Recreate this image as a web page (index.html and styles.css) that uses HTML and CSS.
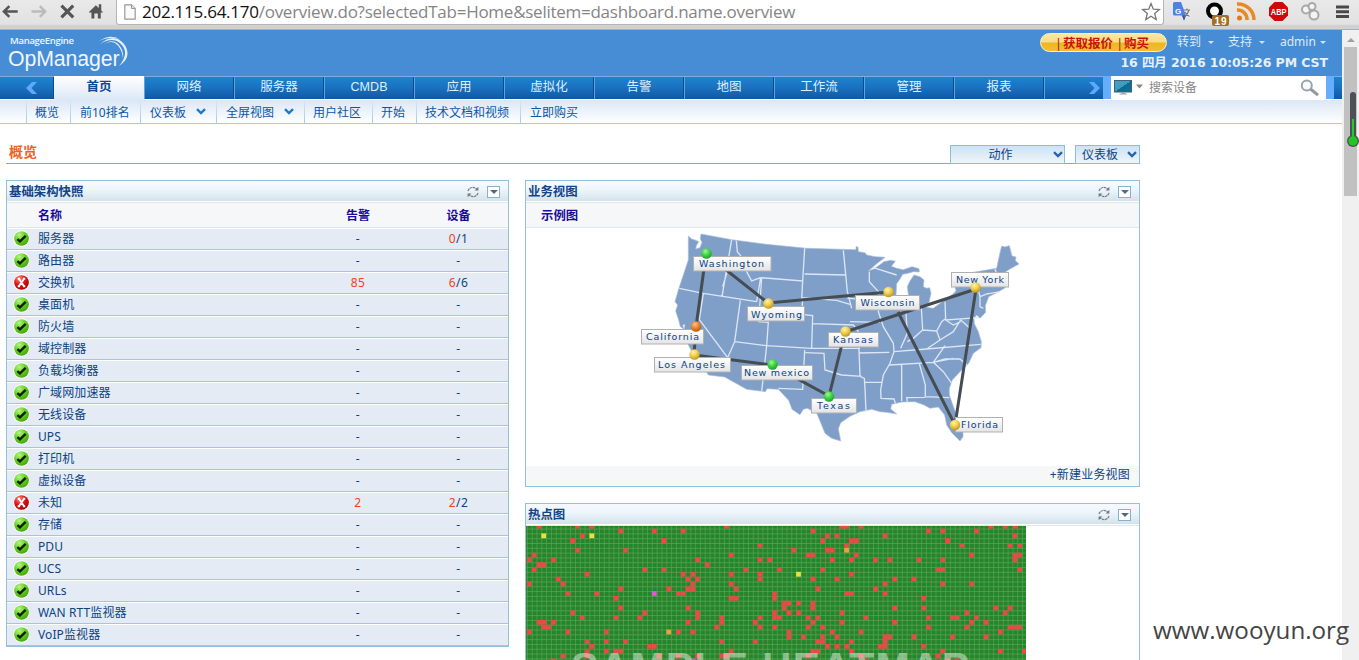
FILE: index.html
```html
<!DOCTYPE html>
<html lang="zh-CN">
<head>
<meta charset="utf-8">
<title>OpManager</title>
<link rel="stylesheet" href="styles.css">
</head>
<body>
<svg class="defs" width="0" height="0">
  <defs>
    <radialGradient id="gOk" cx=".35" cy=".25" r=".8"><stop offset="0" stop-color="#b4f58a"/><stop offset=".5" stop-color="#66cf22"/><stop offset="1" stop-color="#43a508"/></radialGradient>
    <radialGradient id="gBad" cx=".35" cy=".25" r=".8"><stop offset="0" stop-color="#ff8a80"/><stop offset=".5" stop-color="#dc1414"/><stop offset="1" stop-color="#a80000"/></radialGradient>
    <radialGradient id="gG" cx=".4" cy=".3" r=".7"><stop offset="0" stop-color="#a6f59a"/><stop offset=".5" stop-color="#3fd845"/><stop offset="1" stop-color="#24a02c"/></radialGradient>
    <radialGradient id="gY" cx=".4" cy=".3" r=".7"><stop offset="0" stop-color="#fff3b0"/><stop offset=".5" stop-color="#f2cf4b"/><stop offset="1" stop-color="#c09a20"/></radialGradient>
    <radialGradient id="gO" cx=".4" cy=".3" r=".7"><stop offset="0" stop-color="#ffc58c"/><stop offset=".5" stop-color="#ef8630"/><stop offset="1" stop-color="#b85a10"/></radialGradient>
    <linearGradient id="gLabel" x1="0" y1="0" x2="0" y2="1"><stop offset="0" stop-color="#fff"/><stop offset="1" stop-color="#e4e4e4"/></linearGradient>
    <linearGradient id="gMon" x1="0" y1="0" x2="1" y2="1"><stop offset="0" stop-color="#4a9fc0"/><stop offset=".5" stop-color="#3d9bbd"/><stop offset=".5" stop-color="#0c6a94"/><stop offset="1" stop-color="#0d7298"/></linearGradient>
    <symbol id="ok" viewBox="0 0 18 18"><circle cx="9" cy="9" r="8.7" fill="#fff"/><circle cx="9" cy="9" r="7.8" fill="url(#gOk)"/><path d="M4.600 9.600 7.400 12.100 13.400 6.200" fill="none" stroke="#0b1c04" stroke-width="2.400"/></symbol>
    <symbol id="bad" viewBox="0 0 18 18"><circle cx="9" cy="9" r="8.7" fill="#fff"/><circle cx="9" cy="9" r="7.8" fill="url(#gBad)"/><path d="M6.300 5 11.700 13M11.700 5 6.300 13M5 5H7.500M10.500 5H13M5 13H7.500M10.500 13H13" stroke="#fff" stroke-width="2"/></symbol>
    <symbol id="refresh" viewBox="0 0 12 12"><path d="M1 5A5 4.600 0 0 1 10 3.400M11 7A5 4.600 0 0 1 2 8.600" fill="none" stroke="#777f86" stroke-width="1.200" stroke-dasharray="2.600 .5"/><path d="M11.400.800V4.600H7.600ZM.6 11.200V7.400H4.400Z" fill="#707980"/></symbol>
    <symbol id="chev" viewBox="0 0 10 7"><path d="M1 1.200 5 5 9 1.200" fill="none" stroke="currentColor" stroke-width="2.400"/></symbol>
  </defs>
</svg>

<div class="chrome">
  <svg class="chrome-nav" width="118" height="29" viewBox="0 0 118 29">
    <path d="M4 11.500H18M9.500 6 4 11.500 9.500 17" fill="none" stroke="#555" stroke-width="2.600"/>
    <path d="M32 11.500H46M40.500 6 46 11.500 40.500 17" fill="none" stroke="#bbb" stroke-width="2.400"/>
    <path d="M62.500 5.500 74.500 17.500M74.500 5.500 62.500 17.500" stroke="#555" stroke-width="3.200"/>
    <path d="M90.500 12 97.500 5 100.500 8V4H103V10.500L105 12.500H102.500V18.500H99.500V13.500H96V18.500H93V12.500H90.500Z" fill="#555"/>
  </svg>
  <div class="omnibox">
    <svg width="12" height="16" viewBox="0 0 12 16"><path d="M.8.800H7.500L11.200 4.500V15.200H.8Z" fill="#fafafa" stroke="#999" stroke-width="1.200"/><path d="M7.500.800V4.500H11.200" fill="#ddd" stroke="#999"/></svg>
    <span class="url"><b>202.115.64.170</b>/overview.do?selectedTab=Home&amp;selitem=dashboard.name.overview</span>
    <svg class="star" width="20" height="19" viewBox="0 0 20 19"><path d="M10 1.500 12.300 7.200 18.400 7.600 13.700 11.500 15.200 17.500 10 14.200 4.800 17.500 6.300 11.500 1.600 7.600 7.700 7.200Z" fill="#fff" stroke="#777" stroke-width="1.300"/></svg>
  </div>
  <svg class="exts" width="195" height="29" viewBox="1164 0 195 29">
    <path d="M1180 8H1189L1191 18H1182Z" fill="#ececec"/>
    <path d="M1174.500 2H1181L1186 15.500 1184 20.500 1182 15.500H1174.500Q1173 15.500 1173 14V3.500Q1173 2 1174.500 2Z" fill="#4c82e4"/><path d="M1182 15.500H1186L1184 20.500Z" fill="#3053b4"/>
    <text x="1175" y="13.500" class="ico-g">G</text><path d="M1183.500 10H1190M1187 8.500V10M1189 10Q1188 14 1184.500 17M1185 12Q1187 15.500 1189.500 16.500" fill="none" stroke="#777" stroke-width="1.200"/>
    <circle cx="1214.500" cy="11" r="6.500" fill="#fff" stroke="#050505" stroke-width="4"/><rect x="1212" y="15" width="17" height="11" rx="2" fill="#a66f25"/><text x="1214.500" y="24.500" class="ico-19" textLength="12">19</text>
    <g fill="none" stroke="#e88a23" stroke-width="3.500"><path d="M1237 4A16 16 0 0 1 1254 20"/><path d="M1237 10A9.500 9.500 0 0 1 1247 20"/></g><circle cx="1239.500" cy="18" r="2.500" fill="#e07a15"/>
    <path d="M1274.500 2H1282.500L1288 7.500V15.500L1282.500 21H1274.500L1269 15.500V7.500Z" fill="#cf0808"/><text x="1270.800" y="15.200" class="ico-abp" textLength="15.600" lengthAdjust="spacingAndGlyphs">ABP</text>
    <g fill="#f4f4f4" stroke="#a8a8a8" stroke-width="2"><circle cx="1306" cy="9.500" r="4"/><circle cx="1312" cy="6.500" r="3.500"/><circle cx="1314" cy="15" r="4.500"/></g>
    <path d="M1336 7H1349M1336 11.700H1349M1336 16.400H1349" stroke="#484848" stroke-width="3"/>
  </svg>
</div>

<div class="viewport">
<div class="page">
  <header class="top">
    <div class="logo">
      <span class="logo-a">ManageEngine</span><span class="logo-b">OpManager</span>
      <svg class="swoosh" width="34" height="34" viewBox="0 0 34 34"><path d="M3 8Q17-4 27 8 36 21 22 30 33 17 24 8 16 0 3 8ZM5 10Q15 1 22 9 27 15 26 22 25 12 18 7 12 4 5 10ZM2 5Q14-3 24 4 16-1 2 5Z" fill="#e6f1fc"/></svg>
    </div>
    <div class="user">
      <div class="links">
        <span class="buy"><i>|</i>获取报价 <i>|</i>购买</span>
        <span class="lk lk1">转到<i class="tri"></i></span><span class="lk lk2">支持<i class="tri"></i></span><span class="lk lk3">admin<i class="tri"></i></span>
      </div>
      <div class="date">16 四月 2016 10:05:26 PM CST</div>
    </div>
  </header>

  <nav class="nav">
    <span class="prev"><svg width="12" height="14" viewBox="0 0 12 14"><path d="M11 1H6L0 7 6 13H11L5.500 7Z" fill="#5ea8ff"/></svg></span>
    <a class="tab on">首页</a><a class="tab">网络</a><a class="tab">服务器</a><a class="tab lat">CMDB</a><a class="tab">应用</a><a class="tab">虚拟化</a><a class="tab">告警</a><a class="tab">地图</a><a class="tab">工作流</a><a class="tab">管理</a><a class="tab">报表</a>
    <span class="next"><svg width="12" height="14" viewBox="0 0 12 14"><path d="M1 1H6L12 7 6 13H1L6.500 7Z" fill="#5ea8ff"/></svg></span>
    <div class="search">
      <svg width="30" height="16" viewBox="0 0 30 16"><rect x=".5" y=".5" width="17" height="11.500" fill="url(#gMon)" stroke="#3b6276"/><path d="M7.500 12H11V13.500H13V14.500H5.500V13.500H7.500Z" fill="#9aa5aa"/><path d="M22 4.500H29L25.500 8.500Z" fill="#888"/></svg>
      <span>搜索设备</span>
      <svg class="mag" width="20" height="18" viewBox="0 0 20 18"><circle cx="6.800" cy="6.500" r="5" fill="#f8fafc" stroke="#9aa4ad" stroke-width="2"/><path d="M10.500 10 18 16.200" stroke="#9099a0" stroke-width="3"/></svg>
    </div>
  </nav>

  <nav class="sub">
    <a class="s0"></a><a class="s1">概览</a><a class="s2">前10排名</a><a class="s3">仪表板<svg><use href="#chev"/></svg></a><a class="s4">全屏视图<svg><use href="#chev"/></svg></a><a class="s5">用户社区</a><a class="s6">开始</a><a class="s7">技术文档和视频</a><a class="s8">立即购买</a>
  </nav>

  <div class="title">
    <h1>概览</h1>
    <div class="dd dd1"><span>动作</span><svg><use href="#chev"/></svg></div>
    <div class="dd dd2"><span>仪表板</span><svg><use href="#chev"/></svg></div>
  </div>

  <main class="cols">
    <section class="panel left">
      <div class="ph"><h2>基础架构快照</h2><svg class="rf"><use href="#refresh"/></svg><i class="mn"></i></div>
      <div class="row head"><span></span><b>名称</b><b>告警</b><b>设备</b></div>
      <div class="row"><svg><use href="#ok"/></svg><span>服务器</span><em>-</em><em><u>0</u>/1</em></div>
      <div class="row"><svg><use href="#ok"/></svg><span>路由器</span><em>-</em><em>-</em></div>
      <div class="row"><svg><use href="#bad"/></svg><span>交换机</span><em><u>85</u></em><em><u>6</u>/6</em></div>
      <div class="row"><svg><use href="#ok"/></svg><span>桌面机</span><em>-</em><em>-</em></div>
      <div class="row"><svg><use href="#ok"/></svg><span>防火墙</span><em>-</em><em>-</em></div>
      <div class="row"><svg><use href="#ok"/></svg><span>域控制器</span><em>-</em><em>-</em></div>
      <div class="row"><svg><use href="#ok"/></svg><span>负载均衡器</span><em>-</em><em>-</em></div>
      <div class="row"><svg><use href="#ok"/></svg><span>广域网加速器</span><em>-</em><em>-</em></div>
      <div class="row"><svg><use href="#ok"/></svg><span>无线设备</span><em>-</em><em>-</em></div>
      <div class="row"><svg><use href="#ok"/></svg><span>UPS</span><em>-</em><em>-</em></div>
      <div class="row"><svg><use href="#ok"/></svg><span>打印机</span><em>-</em><em>-</em></div>
      <div class="row"><svg><use href="#ok"/></svg><span>虚拟设备</span><em>-</em><em>-</em></div>
      <div class="row"><svg><use href="#bad"/></svg><span>未知</span><em><u>2</u></em><em><u>2</u>/2</em></div>
      <div class="row"><svg><use href="#ok"/></svg><span>存储</span><em>-</em><em>-</em></div>
      <div class="row"><svg><use href="#ok"/></svg><span>PDU</span><em>-</em><em>-</em></div>
      <div class="row"><svg><use href="#ok"/></svg><span>UCS</span><em>-</em><em>-</em></div>
      <div class="row"><svg><use href="#ok"/></svg><span>URLs</span><em>-</em><em>-</em></div>
      <div class="row"><svg><use href="#ok"/></svg><span>WAN RTT监视器</span><em>-</em><em>-</em></div>
      <div class="row"><svg><use href="#ok"/></svg><span>VoIP监视器</span><em>-</em><em>-</em></div>
    </section>

    <div class="right">
      <section class="panel biz">
        <div class="ph"><h2>业务视图</h2><svg class="rf"><use href="#refresh"/></svg><i class="mn"></i></div>
        <div class="bhead">示例图</div>
        <svg class="map" width="613" height="238" viewBox="526 228 613 238">
          <g transform="translate(620 225) scale(.33333)">
            <path class="land" d="M205 33 215 42 225 45 236 50 229 62 227 72 240 68 246 52 241 42 243 27 335 44 440 58 560 70 708 74 708 65 714 66 715 80 735 83 740 90 765 95 795 97 768 118 745 138 762 132 792 110 812 106 826 109 814 124 830 130 850 134 876 125 897 131 898 141 880 140 864 145 848 148 840 162 830 176 828 210 830 235 846 241 862 238 866 215 862 185 870 168 882 150 900 155 912 165 910 185 920 190 929 188 933 205 927 232 918 247 940 250 975 224 1000 206 1008 197 1004 182 1035 160 1060 142 1130 130 1138 92 1145 63 1154 66 1168 62 1176 93 1188 96 1186 107 1197 117 1170 132 1150 145 1134 162 1134 180 1152 180 1156 188 1130 203 1106 215 1096 242 1097 262 1080 280 1070 270 1062 280 1063 296 1075 320 1084 350 1083 368 1060 385 1046 415 1025 435 1013 448 997 465 988 490 988 510 1002 550 1016 585 1029 610 1029 635 1020 648 996 624 980 600 974 570 955 546 930 550 912 540 885 530 845 531 815 538 812 552 830 567 800 562 780 560 755 553 720 560 690 574 662 593 655 611 662 648 635 640 615 625 605 600 590 564 562 550 550 553 540 569 516 553 506 526 475 493 441 491 436 500 380 493 314 456 265 450 250 425 222 402 213 375 190 330 195 298 188 300 191 312 181 305 176 285 167 258 173 240 165 230 175 195 190 150 205 105Z"/>
            <path class="bord" d="M178 190 250 205 410 230M335 44 306 215M349 48 352 80 372 105 380 140 395 168 422 158M322 140 308 185M422 158 548 168 554 70M422 158 410 230M425 158 416 290 445 292 440 362M361 226 344 350 323 398 238 284 250 205M344 350 440 362 575 370M440 362 425 500M554 147 676 150M548 168 545 225M545 218 650 226 690 238M548 225 545 268 578 272 575 370M578 296 700 300 715 320M575 370 720 370M554 375 548 493 475 490M556 383 612 385 615 435 665 450 725 454M670 76 682 200 695 250M682 220 775 225M748 140 748 170 775 200 780 225 775 260 790 305 820 355 822 380 810 415 790 450 782 495 783 520 822 522 826 535M715 320 720 454 733 460 735 490 738 560M718 384 808 382M735 472 785 472M690 290 780 292M760 128 830 150M822 380 920 372 1082 358M808 420 940 412 1000 400M845 420 845 528M898 416 916 480 916 515 988 518M857 250 862 325 842 370M860 250 905 245M904 248 908 315 880 340 862 350M908 315 950 318 965 290 978 280M950 318 960 345 920 372M975 230 977 285 1075 278M977 285 1000 300 1022 290M960 345 1000 320 1022 285 1050 310M940 412 970 440 995 475M975 362 940 412M940 412 975 402 1020 402 1040 420M1062 142 1080 215 1080 245 1090 250M1080 215 1105 205M1125 132 1135 160M1095 208 1140 200M915 517 860 518 862 530"/>
          </g>
          <path class="link" d="M706 254 696 327 694 355 772 365 829 396 845 332 976 289 955 425 898 312M889 292 768 303 706 254"/>
          <g class="lbl">
            <rect x="693.500" y="256.500" width="77.500" height="14.500"/><text x="699" y="267" textLength="65">Washington</text>
            <rect x="747.500" y="306.500" width="57" height="14.500"/><text x="751" y="317.500" textLength="51">Wyoming</text>
            <rect x="855.500" y="295.500" width="64" height="14.500"/><text x="860.500" y="306" textLength="54">Wisconsin</text>
            <rect x="951.500" y="272.500" width="57" height="14.500"/><text x="956" y="283" textLength="48">New York</text>
            <rect x="641.500" y="329.500" width="62" height="14.500"/><text x="646" y="340" textLength="53">California</text>
            <rect x="654.500" y="357.500" width="76" height="14.500"/><text x="658" y="368" textLength="67">Los Angeles</text>
            <rect x="741.500" y="365.500" width="71" height="14.500"/><text x="744" y="376" textLength="65">New mexico</text>
            <rect x="828.500" y="332.500" width="50" height="14.500"/><text x="833" y="343" textLength="40">Kansas</text>
            <rect x="811.500" y="398.500" width="45" height="14.500"/><text x="817" y="409" textLength="33">Texas</text>
            <rect x="955.500" y="417.500" width="47" height="14.500"/><text x="961" y="428" textLength="37">Florida</text>
          </g>
          <g fill="url(#gG)"><circle cx="706.500" cy="253.500" r="5.200"/><circle cx="772.500" cy="364.500" r="5.200"/><circle cx="829" cy="396.500" r="5.200"/></g>
          <g fill="url(#gY)"><circle cx="768.500" cy="303.500" r="5.200"/><circle cx="888.500" cy="292" r="5.200"/><circle cx="975.500" cy="287.500" r="5.200"/><circle cx="694.500" cy="354.500" r="5.200"/><circle cx="845.500" cy="331.500" r="5.200"/><circle cx="955" cy="425" r="5.200"/></g>
          <circle cx="696" cy="326.500" r="5.200" fill="url(#gO)"/>
        </svg>
        <div class="bfoot">+新建业务视图</div>
      </section>
      <section class="panel heat">
        <div class="ph"><h2>热点图</h2><svg class="rf"><use href="#refresh"/></svg><i class="mn"></i></div>
        <svg class="heatmap" width="500" height="134" viewBox="526 526 500 134">
          <defs><pattern id="cell" x="526.900" y="528.600" width="4.807" height="4.807" patternUnits="userSpaceOnUse"><rect width="4.807" height="4.807" fill="#258529"/><path d="M0 0H4.807M0 0V4.807" stroke="#5aa25a" stroke-width="1.300"/></pattern></defs>
          <rect x="526" y="526" width="500" height="134" fill="url(#cell)"/>
          <g id="cells"></g>
          <text x="571" y="680.500" class="sample" textLength="398">SAMPLE HEATMAP</text>
        </svg>
      </section>
    </div>
  </main>
</div>
<div class="scroll"><i class="up"></i><div class="thumb"></div></div>
</div>

<svg class="gauge" width="18" height="60" viewBox="0 0 18 60"><rect x="6" y="0" width="6" height="48" rx="3" fill="#4b5157"/><circle cx="9" cy="49" r="6" fill="#4b5157"/><rect x="8" y="27" width="2" height="20" fill="#2c2"/><circle cx="9" cy="49" r="4.700" fill="#22c522"/></svg>
<div class="mark">www.wooyun.org</div>
<script src="heatmap.js"></script>
</body>
</html>
```

FILE: styles.css
```css
* { box-sizing: border-box; }
body { margin: 0; width: 1359px; height: 660px; overflow: hidden; position: relative; background: #fff; font: 12px/16px "Noto Sans", "Noto Sans CJK SC", sans-serif; color: #0b4383; }
.defs { position: absolute; }
h1, h2 { margin: 0; }
i, em { font-style: normal; }
u { text-decoration: none; color: #f8401c; }

.chrome { height: 30px; display: flex; background: linear-gradient(#e9e9e9, #e2e2e2 24px, #cfcfcf 26px, #d3d3d3 29px, #a9b0b8 29px); }
.chrome-nav { width: 116px; flex: none; }
.omnibox { width: 1048px; height: 25px; background: #fff; border: 1px solid #b5b5b5; border-top: 0; border-radius: 0 0 3px 3px; display: flex; align-items: center; padding: 0 2px 1px 7px; }
.url { margin-left: 6px; font: 17px/22px "Open Sans", sans-serif; color: #858585; white-space: nowrap; letter-spacing: -.26px; }
.url b { font-weight: 400; color: #111; }
.star { margin-left: auto; }
.ico-g { font: bold 8px "Liberation Sans", sans-serif; fill: #fff; }
.ico-19 { font: bold 10px "Liberation Sans", sans-serif; fill: #fff; }
.ico-abp { font: bold 9px "Liberation Sans", sans-serif; fill: #fff; }

.viewport { display: flex; height: 630px; }
.page { width: 1342px; flex: none; overflow: hidden; }
.scroll { width: 17px; background: #f0f0f0; padding: 8px 2px 0; }
.up { display: block; width: 0; margin-left: 3px; border: 4px solid transparent; border-top: 0; border-bottom: 4px solid #a0a0a0; margin-bottom: 5px; }
.thumb { height: 149px; width: 13px; background: #c1c1c1; }

.top { height: 46px; background: #468dd6; display: flex; justify-content: space-between; }
.logo { position: relative; padding: 5px 0 0 8px; color: #eff6ff; width: 135px; }
.logo-a { display: block; font: 600 9.500px/12px "Open Sans", sans-serif; padding-left: 2px; letter-spacing: -.3px; }
.logo-b { display: block; font: 21.300px/25px "Liberation Sans", sans-serif; letter-spacing: -.1px; }
.swoosh { position: absolute; left: 97px; top: 6px; }
.user { width: 302px; }
.links { display: flex; height: 24px; align-items: center; }
.buy { width: 127px; height: 19px; border: 1px solid #fff1c4; border-radius: 10px; background: linear-gradient(#fbe7a4 0, #fbdc80 48%, #eeb722 52%, #f2bd2e); color: #cc1010; font-weight: 700; font-size: 12.500px; line-height: 20px; padding-left: 14px; white-space: nowrap; }
.buy i { font-weight: 400; color: #8c2c10; margin-right: 1px; }
.lk { color: #dfeaf8; display: flex; align-items: center; justify-content: space-between; height: 16px; }
.lk1 { width: 37px; margin-left: 10px; }
.lk2 { width: 37px; margin-left: 14px; }
.lk3 { width: 46px; margin-left: 15px; }
.tri { border: 3px solid transparent; border-top-color: #cfe0f5; border-bottom: 0; }
.date { text-align: right; padding-right: 14px; font: bold 12.500px/18px "DejaVu Sans", "Noto Sans CJK SC", sans-serif; color: #e6effa; white-space: nowrap; letter-spacing: -.08px; }

.nav { height: 24px; display: flex; border-top: 1px solid #79aee6; border-bottom: 1px solid #fff; background: linear-gradient(#1d83cf, #1a73c0 45%, #1057a6); }
.prev { width: 54px; padding: 4px 0 0 26px; border-right: 1px solid #0b4a91; }
.tab { width: 90px; text-align: center; color: #dfeefb; line-height: 20px; border-left: 1px solid #5ea3dd; border-right: 1px solid #0b4a91; font-size: 12.500px; }
.tab.lat { font-family: "Liberation Sans", sans-serif; letter-spacing: .1px; }
.tab.on { margin-top: -1px; height: 24px; line-height: 22px; background: linear-gradient(#fff, #dbe7f6); color: #0b4a94; font-weight: 700; border: 0; }
.next { width: 59px; padding: 4px 0 0 43px; border-left: 1px solid #5ea3dd; }
.search { width: 231px; margin-top: -1px; height: 23px; background: #fff; border: solid #66adfb; border-width: 0 8px; display: flex; align-items: center; padding: 0 6px 0 3px; color: #878787; }
.search span { margin: 1px 0 0 5px; }
.mag { margin-left: auto; }

.sub { height: 24px; display: flex; background: linear-gradient(#dbe7f6, #fff); border-bottom: 1px solid #a9cbe2; }
.sub a { color: #0d56a5; line-height: 25px; padding-left: 9px; border-right: 1px solid; border-image: linear-gradient(#dbe7f6, #9fcbe8) 1; white-space: nowrap; }
.sub svg { width: 10px; height: 7px; margin-left: 10px; margin-bottom: 2px; color: #1a7dc4; }
.sub .s0 { width: 27px; }
.sub .s1 { width: 44px; padding-left: 8px; }
.sub .s2 { width: 70px; }
.sub .s3 { width: 76px; }
.sub .s4 { width: 88px; }
.sub .s5 { width: 68px; padding-left: 8px; }
.sub .s6 { width: 44px; padding-left: 8px; }
.sub .s7 { width: 104px; padding-left: 8px; }
.sub .s8 { border: 0; }

.title { margin: 0 202px 0 6px; height: 40px; border-bottom: 1px solid #74abd9; display: flex; align-items: flex-end; }
h1 { font-size: 14px; line-height: 22px; color: #f15f27; padding-left: 3px; margin-right: auto; font-weight: 700; }
.dd { height: 19px; border: 1px solid #8ebdda; background: linear-gradient(#cfe2f2, #eef4fa); display: flex; align-items: center; margin-bottom: -1px; }
.dd svg { width: 10px; height: 7px; color: #2864aa; }
.dd span { padding-top: 1px; }
.dd1 { width: 115px; margin-right: 10px; }
.dd1 span { width: 102px; text-align: center; padding-right: 3px; }
.dd2 { width: 65px; }
.dd2 span { width: 51px; padding-left: 6px; }

.cols { display: flex; gap: 16px; padding: 16px 0 0 6px; align-items: flex-start; }
.panel { border: 1px solid #93c2d8; background: #fff; }
.left { width: 503px; }
.right { width: 615px; }
.ph { height: 22px; display: flex; align-items: center; background: linear-gradient(#f5faff 0, #eff6fc 8px, #d3e2ea 20px, #fff 20px, #fff 21px, #dfe7ea 21px); padding: 0 8px 0 2px; }
h2 { font-size: 12.400px; line-height: 20px; color: #114488; margin-right: auto; font-weight: 700; }
.rf { width: 12px; height: 12px; margin-right: 8px; }
.mn { width: 13px; height: 12px; border: 1px solid #7fb5d0; background: #fff; display: flex; justify-content: center; align-items: center; }
.mn::before { content: ""; border: 4px solid transparent; border-top: 4px solid #58687a; border-bottom: 0; }
.row { height: 22px; display: grid; grid-template-columns: 31px 270px 100px 101px; align-items: center; background: #e4ebf4; border-top: 1px solid #fff; border-bottom: 1px solid #abc1df; line-height: 20px; }
.row svg { width: 17px; height: 17px; margin: -2px 0 0 6px; }
.row em { text-align: center; letter-spacing: .5px; }
.row span { letter-spacing: .1px; }
.row.head { height: 25px; background: #f6f7f9; border-color: #dfe7ea; border-top: 0; color: #1a0a9c; padding-top: 1px; }
.row b:nth-child(n+3) { text-align: center; }
.bhead { height: 25px; background: #f6f7f9; border-bottom: 1px solid #dfe9ee; color: #1a0a9c; font-weight: 700; line-height: 25px; padding-left: 15px; font-size: 12.400px; }
.biz { height: 307px; }
.map { display: block; }
.land { fill: #7f9ec8; stroke: #a9bddb; stroke-width: 2; }
.bord { fill: none; stroke: #dce6f5; stroke-width: 4; }
.link { fill: none; stroke: #454c52; stroke-width: 3; }
.lbl { font: 9.500px "DejaVu Sans", sans-serif; fill: #0b4383; }
.lbl rect { fill: url(#gLabel); stroke: #b0b0b0; }
.bfoot { height: 20px; background: #f6f7f9; text-align: right; padding-right: 9px; line-height: 17px; color: #0b4383; letter-spacing: .2px; }
.heat { margin-top: 16px; height: 200px; }
.heatmap { display: block; }
.sample { font: bold 41px "Liberation Sans", sans-serif; fill: #fff; fill-opacity: .45; }

.gauge { position: absolute; left: 1344px; top: 92px; }
.mark { position: absolute; left: 1153px; top: 614px; font: 24.200px/32px "Open Sans", sans-serif; color: #444; }
```

FILE: heatmap.js
```js
// Alarmed columns of every heat map row, top to bottom.
const rows = [
  [2, 10, 13, 41, 65, 66, 69, 96, 99, 101],
  [19, 26, 32, 59, 83, 86, 93],
  [11, 62, 64, 74, 101],
  [9, 28, 61, 67, 68, 87],
  [48, 66, 90, 100, 102],
  [10, 20, 55, 62, 63],
  [1, 42, 58, 59, 68, 92, 101, 102],
  [0, 5, 35, 48, 50, 63, 67, 72, 75, 81, 86, 101],
  [2, 3, 37],
  [1, 24, 28, 45, 52, 61, 85, 86, 102],
  [12, 32, 34, 42, 48, 67],
  [6, 33, 35, 48, 59, 64, 76, 80],
  [0, 7, 34, 42, 74, 86, 92],
  [19, 29, 33, 34, 43, 60, 72],
  [8, 14, 31, 32, 51, 66, 67, 74],
  [18, 42, 43, 51, 82],
  [53, 54, 56, 59],
  [19, 33, 53, 59, 76, 82, 97, 100],
  [9, 24, 35, 51, 54, 56, 65, 91, 99],
  [11, 18, 23, 35, 40, 48, 51, 52, 58, 60, 70, 83, 88, 89, 93],
  [2, 3, 5, 33, 40, 47, 59, 65, 76, 92, 95],
  [3, 4, 39, 48, 51, 58, 61, 83, 91, 100, 101, 102],
  [0, 8, 16, 31, 34, 54, 63, 69, 98],
  [54, 57, 61, 64, 74, 75, 80, 88, 95],
  [12, 16, 20, 40, 47, 60, 61, 67, 74],
  [13, 25, 26, 62, 64, 66, 73, 74, 82],
  [12, 16, 18, 19, 42, 59, 60, 67, 86, 98, 103],
  [7, 12, 27, 31, 35, 40, 41, 58, 69, 85],
  [5, 70, 87, 89]
];
const special = [
  [2, 3, "#e9e23c"], [2, 13, "#e9e23c"], [10, 56, "#e9e23c"],
  [5, 66, "#e5a33c"], [22, 29, "#e5a33c"],
  [14, 26, "#e554e0"], [28, 34, "#c060d0"]
];
const pitch = 4.807;
const group = document.getElementById("cells");

function add(row, col, color) {
  const r = document.createElementNS("http://www.w3.org/2000/svg", "rect");
  r.setAttribute("x", (526.9 + col * pitch).toFixed(2));
  r.setAttribute("y", (523.8 + row * pitch).toFixed(2));
  r.setAttribute("width", 4.8);
  r.setAttribute("height", 4.8);
  r.setAttribute("fill", color);
  group.appendChild(r);
}

rows.forEach((cols, row) => cols.forEach(col => add(row, col, "#e84a45")));
special.forEach(([row, col, color]) => add(row, col, color));
```
